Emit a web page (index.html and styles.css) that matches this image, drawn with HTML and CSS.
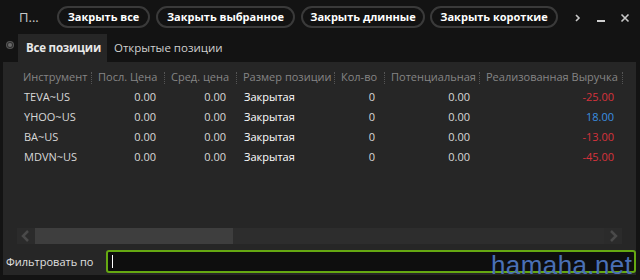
FILE: index.html
```html
<!DOCTYPE html>
<html lang="ru">
<head>
    <meta charset="UTF-8">
    <link rel="stylesheet" href="styles.css">
</head>
<body>

    <div class="topbar">
        <span class="title">П...</span>
        <button class="pill w1">Закрыть все</button>
        <button class="pill w2">Закрыть выбранное</button>
        <button class="pill w3">Закрыть длинные</button>
        <button class="pill w4">Закрыть короткие</button>
        <div class="controls">
            <svg width="8" height="10" viewBox="0 0 8 10"><path d="M2 2 L5 5 L2 8" fill="none" stroke="#c8c8c8" stroke-width="1.6"/></svg>
            <svg width="10" height="10" viewBox="0 0 10 10"><path d="M1 8 H9" stroke="#d0d0d0" stroke-width="2"/></svg>
            <svg width="10" height="10" viewBox="0 0 10 10"><path d="M1.5 1.5 L8.5 8.5 M8.5 1.5 L1.5 8.5" stroke="#c8c8c8" stroke-width="1.6"/></svg>
        </div>
    </div>

    <div class="tabs">
        <span class="dot"></span>
        <div class="tab active">Все позиции</div>
        <div class="tab">Открытые позиции</div>
    </div>

    <div class="panel">
        <div class="grid">
            <div class="th first">Инструмент</div>
            <div class="th">Посл. Цена</div>
            <div class="th">Сред. цена</div>
            <div class="th">Размер позиции</div>
            <div class="th">Кол-во</div>
            <div class="th">Потенциальная</div>
            <div class="th">Реализованная Выручка</div>

            <div class="td first">TEVA~US</div>
            <div class="td num p2">0.00</div>
            <div class="td num p3">0.00</div>
            <div class="td state">Закрытая</div>
            <div class="td num p5">0</div>
            <div class="td num p6">0.00</div>
            <div class="td num p7 loss">-25.00</div>

            <div class="td first">YHOO~US</div>
            <div class="td num p2">0.00</div>
            <div class="td num p3">0.00</div>
            <div class="td state">Закрытая</div>
            <div class="td num p5">0</div>
            <div class="td num p6">0.00</div>
            <div class="td num p7 gain">18.00</div>

            <div class="td first">BA~US</div>
            <div class="td num p2">0.00</div>
            <div class="td num p3">0.00</div>
            <div class="td state">Закрытая</div>
            <div class="td num p5">0</div>
            <div class="td num p6">0.00</div>
            <div class="td num p7 loss">-13.00</div>

            <div class="td first">MDVN~US</div>
            <div class="td num p2">0.00</div>
            <div class="td num p3">0.00</div>
            <div class="td state">Закрытая</div>
            <div class="td num p5">0</div>
            <div class="td num p6">0.00</div>
            <div class="td num p7 loss">-45.00</div>
        </div>

        <div class="scrollbar">
            <div class="arrow">
                <svg width="10" height="12" viewBox="0 0 10 12"><path d="M7 1 L2 6 L7 11" fill="none" stroke="#4a4a4a" stroke-width="2.5"/></svg>
            </div>
            <div class="thumb"></div>
            <div class="track"></div>
            <div class="arrow">
                <svg width="10" height="12" viewBox="0 0 10 12"><path d="M3 1 L8 6 L3 11" fill="none" stroke="#4a4a4a" stroke-width="2.5"/></svg>
            </div>
        </div>

        <div class="filter">
            <label class="filter-label">Фильтровать по</label>
            <div class="filter-input"><span class="caret"></span></div>
        </div>
    </div>

    <div class="watermark">hamaha.net</div>

</body>
</html>
```

FILE: styles.css
```css
body {
    font-family: 'Open Sans', 'Noto Sans', sans-serif;
    background-color: #131313;
    margin: 0;
    padding: 0;
    width: 640px;
    height: 280px;
    overflow: hidden;
    position: relative;
    color: #d8d8d8;
}

.topbar {
    height: 34px;
    display: flex;
    align-items: center;
    gap: 6px;
    padding-left: 19px;
}

.title {
    font-size: 13px;
    color: #c8c8c8;
    width: 32px;
    flex-shrink: 0;
}

.pill {
    flex-shrink: 0;
    height: 22px;
    padding: 0;
    border: 2px solid #3a3a3a;
    border-radius: 11px;
    background: #121212;
    color: #ffffff;
    font-family: 'Open Sans', sans-serif;
    font-size: 11px;
    font-weight: bold;
    line-height: 16px;
    white-space: nowrap;
    text-align: center;
}

.w1 { width: 93px; }
.w2 { width: 139px; }
.w3 { width: 124px; margin-right: -1px; }
.w4 { width: 128px; }

.controls {
    display: flex;
    align-items: center;
    gap: 14px;
    margin-left: 10px;
    padding-top: 1px;
}

.tabs {
    height: 28px;
    display: flex;
    align-items: stretch;
    padding-left: 8px;
}

.dot {
    width: 4px;
    height: 4px;
    margin-top: 9px;
    margin-right: 6px;
    border-radius: 50%;
    background: #6a6a6a;
    box-shadow: 0 0 0 1px #2e2e2e, 0 0 0 2px #555;
}

.tab {
    padding: 0 7px;
    font-size: 11.5px;
    line-height: 28px;
    color: #d0d0d0;
    white-space: nowrap;
}

.tab.active {
    background: #262626;
    color: #e8e8e8;
    font-weight: bold;
    padding: 0 6px 0 8px;
    letter-spacing: -0.2px;
}

.panel {
    background: #262626;
    margin: 0 4px 0 3px;
    height: 213px;
    display: flex;
    flex-direction: column;
}

.grid {
    display: grid;
    grid-template-columns: 89px 73px 72px 98px 50px 95px 143px;
    grid-auto-rows: 20px;
    margin-top: 5px;
    flex: 1;
    align-content: start;
}

.th {
    font-size: 11px;
    color: #858585;
    line-height: 20px;
    padding-left: 6px;
    white-space: nowrap;
    position: relative;
    margin-bottom: 2px;
}

.th::after {
    content: "";
    position: absolute;
    right: 0;
    top: 5px;
    height: 12px;
    border-right: 1px dotted #555555;
}

.th.first {
    padding-left: 20px;
}

.td {
    font-size: 11px;
    line-height: 20px;
    color: #d8d8d8;
    white-space: nowrap;
}

.td.first {
    padding-left: 21px;
}

.num {
    text-align: right;
}

.p2 { padding-right: 9px; }
.p3 { padding-right: 11px; }
.p5 { padding-right: 10px; }
.p6 { padding-right: 10px; }
.p7 { padding-right: 9px; }

.state {
    padding-left: 7px;
    color: #ffffff;
}

.loss {
    color: #d6323c;
}

.gain {
    color: #3a8fe0;
}

.scrollbar {
    height: 16px;
    margin: 0 14px 6px 14px;
    display: flex;
    background: #2d2d2d;
}

.arrow {
    width: 18px;
    display: flex;
    align-items: center;
    justify-content: center;
    background: #2b2b2b;
}

.thumb {
    width: 198px;
    background: #3e3e3e;
}

.track {
    flex: 1;
}

.filter {
    height: 23px;
    display: flex;
    align-items: center;
    margin-bottom: 2px;
}

.filter-label {
    font-size: 11px;
    color: #e0e0e0;
    padding-left: 3px;
    width: 100px;
    white-space: nowrap;
}

.filter-input {
    width: 523px;
    height: 19px;
    border: 2px solid #65a812;
    border-radius: 3px;
    background: #0e0e0e;
    display: flex;
    align-items: center;
    padding-left: 4px;
}

.caret {
    width: 1px;
    height: 13px;
    background: #ffffff;
}

.watermark {
    position: absolute;
    left: 491px;
    top: 254px;
    font-family: 'Liberation Sans', Arial, sans-serif;
    font-size: 26px;
    line-height: 22px;
    letter-spacing: 0.4px;
    color: #4a70b6;
}
```
